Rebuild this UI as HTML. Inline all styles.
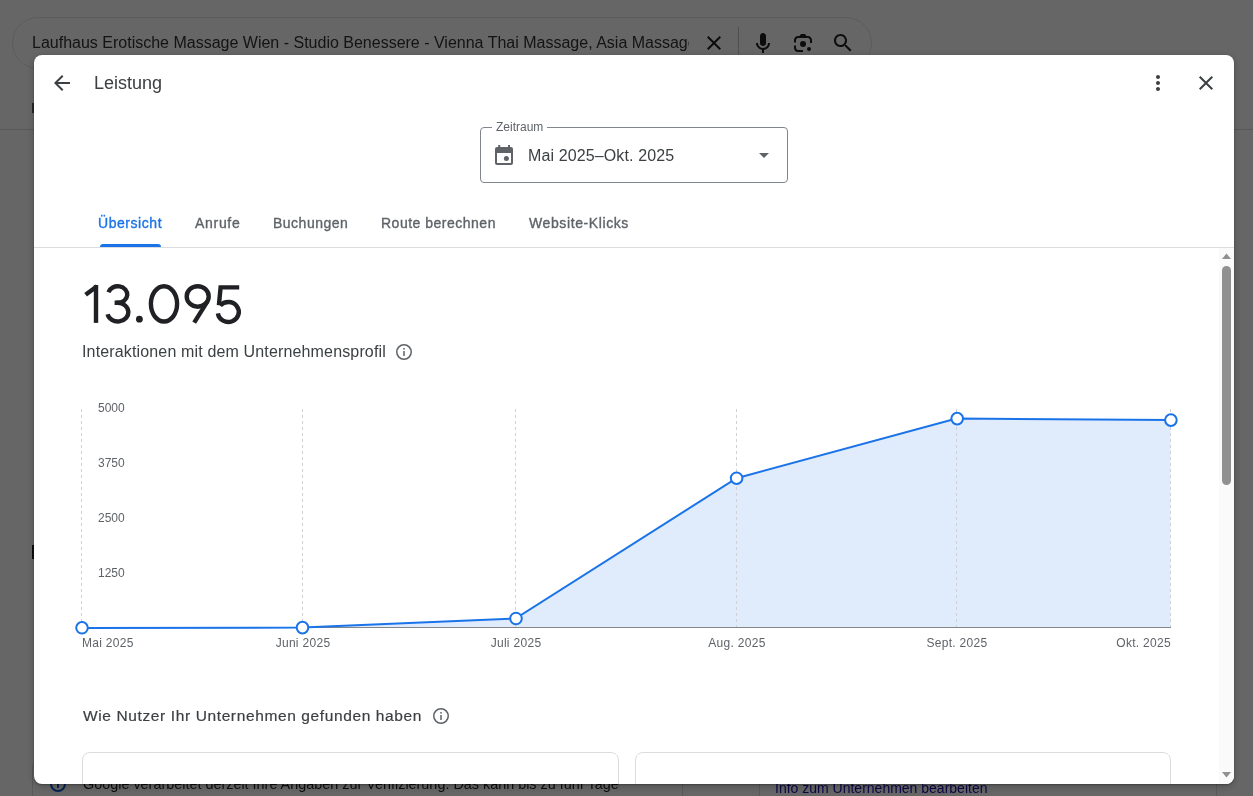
<!DOCTYPE html>
<html><head><meta charset="utf-8">
<style>
*{box-sizing:border-box;margin:0;padding:0}
html,body{width:1253px;height:796px;overflow:hidden;background:#fff;font-family:"Liberation Sans",sans-serif}
.abs{position:absolute;white-space:nowrap}
#page{position:absolute;left:0;top:0;width:1253px;height:796px;background:#fff;will-change:transform}
#scrim{position:absolute;left:0;top:0;width:1253px;height:796px;background:rgba(0,0,0,0.6)}
#dlg{position:absolute;left:34px;top:55px;width:1200px;height:729px;background:#fff;border-radius:8px;overflow:hidden;box-shadow:0 1px 2px rgba(0,0,0,.3),0 2px 6px 2px rgba(0,0,0,.15)}
#pc{position:absolute;left:-34px;top:-55px;width:1253px;height:796px;will-change:transform}
.t{position:absolute;white-space:nowrap;line-height:1}
</style></head><body>
<div id="page">
  <!-- search pill -->
  <div class="abs" style="left:12px;top:17px;width:860px;height:52px;border:1px solid #e6e6e6;border-radius:26px;background:#fff"></div>
  <div class="abs" style="left:32px;top:30px;width:657px;height:26px;overflow:hidden">
    <div class="t" style="left:0;top:5px;font-size:16px;color:#333">Laufhaus Erotische Massage Wien - Studio Benessere - Vienna Thai Massage, Asia Massage</div>
  </div>
  <svg class="abs" style="left:702px;top:31px" width="24" height="24" viewBox="0 0 24 24"><path fill="#1f1f1f" d="M19 6.41L17.59 5 12 10.59 6.41 5 5 6.41 10.59 12 5 17.59 6.41 19 12 13.41 17.59 19 19 17.59 13.41 12z"/></svg>
  <div class="abs" style="left:738px;top:27px;width:1px;height:32px;background:#c4c7c5"></div>
  <svg class="abs" style="left:751px;top:31px" width="24" height="24" viewBox="0 0 24 24"><path fill="#1f1f1f" d="m12 15c1.66 0 3-1.31 3-2.97v-7.02c0-1.66-1.34-3.01-3-3.01s-3 1.34-3 3.01v7.02c0 1.66 1.34 2.97 3 2.970z"/><path fill="#1f1f1f" d="m11 18.08h2v3.92h-2z"/><path fill="#1f1f1f" d="m7.05 16.870c-1.270-1.330-2.050-2.830-2.050-4.870h2c0 1.45 0.56 2.42 1.47 3.38v0.32l-1.15 1.18z"/><path fill="#1f1f1f" d="m12 16.93a4.97 5.25 0 0 1 -3.54 -1.55l-1.41 1.49c1.26 1.34 3.02 2.13 4.95 2.13 3.87 0 6.99-2.92 6.99-6.99h-1.99c0 2.92-2.24 4.93-5 4.93z"/></svg>
  <svg class="abs" style="left:791px;top:31px" width="24" height="24" viewBox="0 0 192 192"><g fill="#1f1f1f"><circle cx="144.07" cy="144" r="16"/><circle cx="96.07" cy="104" r="24"/><path d="M24,135.2c0,18.11,14.69,32.8,32.8,32.8H96v-16l-40.1-0.1c-8.8,0-15.9-8.19-15.9-17.9v-18H24V135.2z"/><path d="M168,72.8c0-18.11-14.690-32.8-32.8-32.8H116l20,16c8.8,0,16,8.29,16,17.9V96h16V72.8z"/><path d="M112,24l-32,0L68,40H56.8C38.69,40,24,54.69,24,72.8V92h16V74c0-9.71,7.2-18,16-18h80L112,24z"/></g></svg>
  <svg class="abs" style="left:831px;top:31px" width="24" height="24" viewBox="0 0 24 24"><path fill="#1f1f1f" d="M15.5 14h-.79l-.28-.27C15.41 12.59 16 11.11 16 9.5 16 5.910 13.090 3 9.5 3S3 5.910 3 9.5 5.910 16 9.5 16c1.610 0 3.090-.59 4.230-1.570l.27.28v.79l5 4.990L20.490 19l-4.990-5zm-6 0C7.010 14 5 11.990 5 9.5S7.010 5 9.5 5 14 7.010 14 9.5 11.990 14 9.5 14z"/></svg>
  <div class="abs" style="left:0;top:129px;width:1253px;height:1px;background:#dadce0"></div>
  <div class="abs" style="left:32px;top:103px;width:2px;height:10px;background:#5f6368"></div>
  <div class="abs" style="left:32px;top:545px;width:2px;height:14px;background:#1f1f1f"></div>
  <!-- bottom page -->
  <div class="abs" style="left:32px;top:759px;width:651px;height:60px;border:1px solid #dadce0;border-radius:8px"></div>
  <div class="abs" style="left:759px;top:759px;width:458px;height:60px;border:1px solid #dadce0;border-radius:8px"></div>
  <div class="abs" style="left:50px;top:775.5px;width:16px;height:16px;border:2px solid #0b57d0;border-radius:50%"><div class="abs" style="left:5px;top:5px;width:2px;height:5px;background:#0b57d0"></div></div>
  <div class="t" style="left:83px;top:776.5px;font-size:14.4px;color:#1f1f1f">Google verarbeitet derzeit Ihre Angaben zur Verifizierung. Das kann bis zu fünf Tage</div>
  <div class="t" style="left:775px;top:781px;font-size:14px;color:#1a0dab">Info zum Unternehmen bearbeiten</div>
</div>
<div id="scrim"></div>
<div id="dlg"><div id="pc">
  <!-- header -->
  <svg class="abs" style="left:50px;top:71px" width="24" height="24" viewBox="0 0 24 24"><path fill="#3c4043" d="M20 11H7.83l5.59-5.59L12 4l-8 8 8 8 1.41-1.41L7.83 13H20v-2z"/></svg>
  <div class="t" id="hdr" style="left:94px;top:74px;font-size:18px;color:#3c4043">Leistung</div>
  <svg class="abs" style="left:1146px;top:71px" width="24" height="24" viewBox="0 0 24 24"><path fill="#3c4043" d="M12 8c1.1 0 2-.9 2-2s-.9-2-2-2-2 .9-2 2 .9 2 2 2zm0 2c-1.1 0-2 .9-2 2s.9 2 2 2 2-.9 2-2-.9-2-2-2zm0 6c-1.1 0-2 .9-2 2s.9 2 2 2 2-.9 2-2-.9-2-2-2z"/></svg>
  <svg class="abs" style="left:1194px;top:71px" width="24" height="24" viewBox="0 0 24 24"><path fill="#3c4043" d="M19 6.41L17.59 5 12 10.59 6.41 5 5 6.41 10.59 12 5 17.59 6.41 19 12 13.41 17.59 19 19 17.59 13.41 12z"/></svg>
  <!-- date picker -->
  <div class="abs" style="left:480px;top:127px;width:308px;height:56px;border:1px solid #80868b;border-radius:4px"></div>
  <div class="t" id="zr" style="left:492px;top:121px;padding:0 4px;background:#fff;font-size:12px;color:#5f6368">Zeitraum</div>
  <svg class="abs" style="left:492px;top:143px" width="24" height="24" viewBox="0 0 24 24"><path fill="#5f6368" d="M6.2 2h2v2h-2zM16 2h2v2h-2z"/><path fill="#5f6368" d="M5 4h14a2 2 0 0 1 2 2v14a2 2 0 0 1-2 2H5a2 2 0 0 1-2-2V6a2 2 0 0 1 2-2zm0 6v10h14V10z"/><circle cx="14.4" cy="15.6" r="2.5" fill="#5f6368"/></svg>
  <div class="t" id="dt" style="left:528px;top:147.5px;font-size:16px;letter-spacing:0.12px;color:#3c4043">Mai 2025–Okt. 2025</div>
  <svg class="abs" style="left:752px;top:143px" width="24" height="24" viewBox="0 0 24 24"><path fill="#5f6368" d="M7 10l5 5 5-5z"/></svg>
  <!-- tabs -->
  <div class="t" style="left:98px;top:216px;font-size:14px;letter-spacing:0.55px;color:#1a73e8;-webkit-text-stroke:0.35px #1a73e8">Übersicht</div>
  <div class="t" style="left:195px;top:216px;font-size:14px;letter-spacing:0.7px;color:#5f6368;-webkit-text-stroke:0.35px #5f6368">Anrufe</div>
  <div class="t" style="left:273px;top:216px;font-size:14px;letter-spacing:0.5px;color:#5f6368;-webkit-text-stroke:0.35px #5f6368">Buchungen</div>
  <div class="t" style="left:381px;top:216px;font-size:14px;letter-spacing:0.5px;color:#5f6368;-webkit-text-stroke:0.35px #5f6368">Route berechnen</div>
  <div class="t" style="left:529px;top:216px;font-size:14px;letter-spacing:0.6px;color:#5f6368;-webkit-text-stroke:0.35px #5f6368">Website-Klicks</div>
  <div class="abs" style="left:100px;top:244px;width:61px;height:3px;background:#1a73e8;border-radius:3px 3px 0 0"></div>
  <div class="abs" style="left:34px;top:247px;width:1200px;height:1px;background:#dadce0"></div>
  <!-- scrollbar -->
  <div class="abs" style="left:1219px;top:248px;width:15px;height:536px;background:#fafafa"></div>
  <svg class="abs" style="left:1219px;top:248px" width="15" height="536"><path fill="#909090" d="M3 11h9l-4.5-5.5z"/><rect x="3" y="18" width="9" height="219" rx="4.5" fill="#909090"/><path fill="#909090" d="M3 524h9l-4.5 5.5z"/></svg>
  <!-- big number -->
  <svg class="abs" style="left:0;top:0" width="1253" height="796"><g fill="none" stroke="#202124" stroke-width="4.4">
    <path d="M96,285 V322.9"/><path d="M97,286.2 L85.6,294.8"/>
    <path d="M108.5,292.2 A9.6,8.25 0 1 1 117.7,302.8 H114.6"/>
    <path d="M116.5,302.8 H117.9 A10.5,9.35 0 1 1 107.6,314.2"/>
    <ellipse cx="164" cy="303.85" rx="13.1" ry="17.65"/>
    <ellipse cx="197.7" cy="296.45" rx="11" ry="10.25"/><path d="M207.6,301.2 L194.2,322.6"/>
    <path d="M239.2,287.4 H220.6 L218.9,305.2"/>
    <path d="M220.2,305.6 A10.5,10 0 1 1 217.9,313.4"/>
  </g><circle cx="139.4" cy="319.2" r="3.4" fill="#202124"/></svg>
  <div class="t" id="sub" style="left:82px;top:344px;font-size:16px;letter-spacing:0.15px;color:#3c4043">Interaktionen mit dem Unternehmensprofil</div>
  <svg class="abs" style="left:394px;top:342px" width="20" height="20" viewBox="0 0 20 20"><circle cx="10" cy="10" r="7.25" fill="none" stroke="#5f6368" stroke-width="1.5"/><rect x="9.25" y="9" width="1.5" height="5" fill="#5f6368"/><rect x="9.25" y="6" width="1.5" height="1.6" fill="#5f6368"/></svg>
  <!-- chart -->
  <svg class="abs" style="left:0;top:0" width="1253" height="796">
    
    <polygon fill="#e0ebfb" points="81.5,628 302.5,627.6 515.5,618.5 736.5,478.2 956.5,418.6 1170.5,420.1 1170.5,627 81.5,627"/>
    <g stroke="#cfd1d4" stroke-width="1" stroke-dasharray="3,3">
      <line x1="81.5" y1="409" x2="81.5" y2="627"/>
      <line x1="302.5" y1="409" x2="302.5" y2="627"/>
      <line x1="515.5" y1="409" x2="515.5" y2="627"/>
      <line x1="736.5" y1="409" x2="736.5" y2="627"/>
      <line x1="956.5" y1="409" x2="956.5" y2="627"/>
      <line x1="1170.5" y1="409" x2="1170.5" y2="627"/>
    </g>
    <line x1="81" y1="627.5" x2="1171" y2="627.5" stroke="#80868b" stroke-width="1"/>
    <polyline fill="none" stroke="#1a73e8" stroke-width="2" points="81.5,628 302.5,627.6 515.5,618.5 736.5,478.2 956.5,418.6 1170.5,420.1"/>
    <g fill="#fff" stroke="#1a73e8" stroke-width="2">
      <circle cx="82" cy="627.8" r="5.8"/>
      <circle cx="302.5" cy="627.6" r="5.8"/>
      <circle cx="516" cy="618.5" r="5.8"/>
      <circle cx="736.6" cy="478.2" r="5.8"/>
      <circle cx="957.2" cy="418.6" r="5.8"/>
      <circle cx="1170.9" cy="420.1" r="5.8"/>
    </g>
  </svg>
  <div class="t" style="left:98px;top:402px;font-size:12px;color:#5f6368">5000</div>
  <div class="t" style="left:98px;top:457px;font-size:12px;color:#5f6368">3750</div>
  <div class="t" style="left:98px;top:512px;font-size:12px;color:#5f6368">2500</div>
  <div class="t" style="left:98px;top:567px;font-size:12px;color:#5f6368">1250</div>
  <div class="t" style="left:82px;top:637px;font-size:12px;letter-spacing:0.3px;color:#5f6368">Mai 2025</div>
  <div class="t" style="left:303px;top:637px;font-size:12px;letter-spacing:0.3px;color:#5f6368;transform:translateX(-50%)">Juni 2025</div>
  <div class="t" style="left:516px;top:637px;font-size:12px;letter-spacing:0.3px;color:#5f6368;transform:translateX(-50%)">Juli 2025</div>
  <div class="t" style="left:737px;top:637px;font-size:12px;letter-spacing:0.3px;color:#5f6368;transform:translateX(-50%)">Aug. 2025</div>
  <div class="t" style="left:957px;top:637px;font-size:12px;letter-spacing:0.3px;color:#5f6368;transform:translateX(-50%)">Sept. 2025</div>
  <div class="t" style="left:1171px;top:637px;font-size:12px;letter-spacing:0.3px;color:#5f6368;transform:translateX(-100%)">Okt. 2025</div>
  <!-- section 2 -->
  <div class="t" id="h2" style="left:83px;top:708px;-webkit-text-stroke:0.2px #3c4043;font-size:15.5px;letter-spacing:0.62px;color:#3c4043">Wie Nutzer Ihr Unternehmen gefunden haben</div>
  <svg class="abs" style="left:431px;top:706px" width="20" height="20" viewBox="0 0 20 20"><circle cx="10" cy="10" r="7.25" fill="none" stroke="#5f6368" stroke-width="1.5"/><rect x="9.25" y="9" width="1.5" height="5" fill="#5f6368"/><rect x="9.25" y="6" width="1.5" height="1.6" fill="#5f6368"/></svg>
  <div class="abs" style="left:82px;top:752px;width:537px;height:80px;border:1px solid #dadce0;border-radius:8px"></div>
  <div class="abs" style="left:635px;top:752px;width:536px;height:80px;border:1px solid #dadce0;border-radius:8px"></div>
</div></div>
</body></html>
